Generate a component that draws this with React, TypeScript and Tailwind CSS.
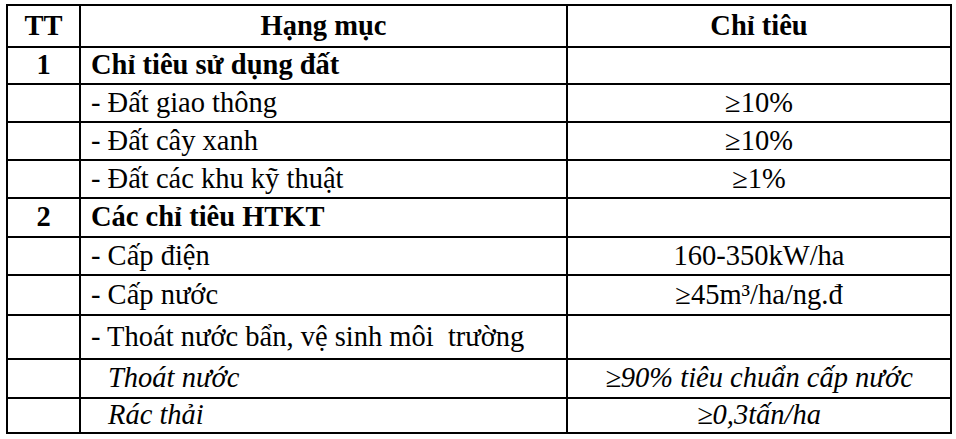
const rows: { tt?: string; item: string; value: string; kind: "group" | "item" | "sub"; h: number }[] = [
  { tt: "1", item: "Chỉ tiêu sử dụng đất", value: "", kind: "group", h: 37 },
  { item: "- Đất giao thông", value: "≥10%", kind: "item", h: 38 },
  { item: "- Đất cây xanh", value: "≥10%", kind: "item", h: 38 },
  { item: "- Đất các khu kỹ thuật", value: "≥1%", kind: "item", h: 38 },
  { tt: "2", item: "Các chỉ tiêu HTKT", value: "", kind: "group", h: 39 },
  { item: "- Cấp điện", value: "160-350kW/ha", kind: "item", h: 38 },
  { item: "- Cấp nước", value: "≥45m³/ha/ng.đ", kind: "item", h: 40 },
  { item: "- Thoát nước bẩn, vệ sinh môi  trường", value: "", kind: "item", h: 44 },
  { item: "Thoát nước", value: "≥90% tiêu chuẩn cấp nước", kind: "sub", h: 39 },
  { item: "Rác thải", value: "≥0,3tấn/ha", kind: "sub", h: 35 },
]

export default function App() {
  return (
    <div className="min-h-[439px] w-[956px] bg-white pt-[4px] pl-[6px] text-black font-['Liberation_Serif','Times_New_Roman',serif] text-[28.5px] leading-none">
      <table className="w-[944px] table-fixed border-collapse">
        <colgroup>
          <col className="w-[73px]" />
          <col className="w-[487px]" />
          <col className="w-[384px]" />
        </colgroup>
        <thead>
          <tr className="h-[42px]">
            <th className="border-2 border-black text-center font-bold">TT</th>
            <th className="border-2 border-black text-center font-bold">Hạng mục</th>
            <th className="border-2 border-black text-center font-bold">Chỉ tiêu</th>
          </tr>
        </thead>
        <tbody>
          {rows.map((r, i) => (
            <tr key={i} style={{ height: r.h }}>
              <td className="border-2 border-black text-center font-bold">{r.tt}</td>
              <td
                className={
                  r.kind === "group"
                    ? "border-2 border-black pl-[10px] font-bold"
                    : r.kind === "sub"
                      ? "border-2 border-black pl-[27px] italic"
                      : "border-2 border-black pl-[10px] whitespace-pre"
                }
              >
                {r.item}
              </td>
              <td className={r.kind === "sub" ? "border-2 border-black text-center italic" : "border-2 border-black text-center"}>
                {r.value}
              </td>
            </tr>
          ))}
        </tbody>
      </table>
    </div>
  )
}
